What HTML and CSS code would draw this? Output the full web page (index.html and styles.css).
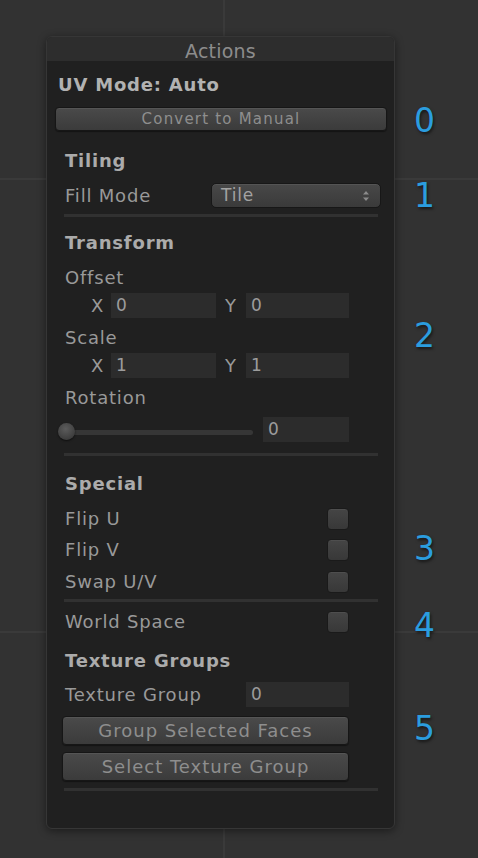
FILE: index.html
```html
<!DOCTYPE html>
<html>
<head>
<meta charset="utf-8">
<link rel="stylesheet" href="styles.css">
</head>
<body>
<div class="stage">
  <div class="panel">
    <div class="panel-header">Actions</div>
    <div class="panel-body">
      <div class="mode-title">UV Mode: Auto</div>
      <div class="btn btn-convert">Convert to Manual</div>

      <div class="heading h-tiling">Tiling</div>
      <div class="row row-fill">
        <span class="label">Fill Mode</span>
        <div class="dropdown">
          <span>Tile</span>
          <svg class="arrows" width="8" height="12" viewBox="0 0 8 12"><path d="M4 1 L7 4.5 L1 4.5 Z M4 11 L7 7.5 L1 7.5 Z" fill="#8a8a8a"/></svg>
        </div>
      </div>
      <div class="sep sep-1"></div>

      <div class="heading h-transform">Transform</div>
      <div class="label-row lr-offset">Offset</div>
      <div class="xy-row xy-1">
        <span class="axis">X</span><div class="field f-x">0</div>
        <span class="axis axis-y">Y</span><div class="field f-y">0</div>
      </div>
      <div class="label-row lr-scale">Scale</div>
      <div class="xy-row xy-2">
        <span class="axis">X</span><div class="field f-x">1</div>
        <span class="axis axis-y">Y</span><div class="field f-y">1</div>
      </div>
      <div class="label-row lr-rot">Rotation</div>
      <div class="slider-row">
        <div class="slider"><div class="track"></div><div class="knob"></div></div>
        <div class="field f-rot">0</div>
      </div>
      <div class="sep sep-2"></div>

      <div class="heading h-special">Special</div>
      <div class="check-row cr-1"><span class="label">Flip U</span><div class="checkbox"></div></div>
      <div class="check-row cr-2"><span class="label">Flip V</span><div class="checkbox"></div></div>
      <div class="check-row cr-3"><span class="label">Swap U/V</span><div class="checkbox"></div></div>
      <div class="sep sep-3"></div>
      <div class="check-row cr-4"><span class="label">World Space</span><div class="checkbox"></div></div>

      <div class="heading h-groups">Texture Groups</div>
      <div class="row row-group">
        <span class="label">Texture Group</span>
        <div class="field f-group">0</div>
      </div>
      <div class="btn btn-big bb-1">Group Selected Faces</div>
      <div class="btn btn-big bb-2">Select Texture Group</div>
      <div class="sep sep-4"></div>
    </div>
  </div>

  <div class="callouts">
    <div class="num n0">0</div>
    <div class="num n1">1</div>
    <div class="num n2">2</div>
    <div class="num n3">3</div>
    <div class="num n4">4</div>
    <div class="num n5">5</div>
  </div>
</div>
</body>
</html>
```
FILE: styles.css
```css
html, body {
  margin: 0;
  padding: 0;
}
body {
  width: 478px;
  height: 858px;
  overflow: hidden;
  background-color: #323232;
  background-image:
    linear-gradient(to right, transparent 223px, #3a3a3a 223px, #3a3a3a 225px, transparent 225px),
    linear-gradient(to bottom, transparent 178px, #3a3a3a 178px, #3a3a3a 180px, transparent 180px),
    linear-gradient(to bottom, transparent 631px, #3a3a3a 631px, #3a3a3a 633px, transparent 633px);
  font-family: "DejaVu Sans", "Liberation Sans", sans-serif;
  color: #999999;
}
.stage {
  display: flex;
  align-items: flex-start;
  padding-left: 46px;
}
.panel {
  margin-top: 36px;
  width: 349px;
  height: 793px;
  box-sizing: border-box;
  border: 1px solid #363636;
  border-radius: 6px;
  background: #202020;
  box-shadow: 0 2px 8px rgba(0, 0, 0, 0.45);
  overflow: hidden;
}
.panel-header {
  height: 24px;
  line-height: 28px;
  background: #2d2d2d;
  text-align: center;
  font-size: 19px;
  letter-spacing: 0.2px;
  color: #8c8c8c;
}
.panel-body {
  display: flex;
  flex-direction: column;
}
.mode-title {
  margin: 9px 0 0 11px;
  height: 30px;
  line-height: 30px;
  font-size: 18px;
  font-weight: bold;
  letter-spacing: 0.8px;
  color: #b2b2b2;
}
.btn {
  box-sizing: border-box;
  border: 1px solid #161616;
  border-radius: 4px;
  background: linear-gradient(to bottom, #4a4a4a, #3b3b3b);
  box-shadow: inset 0 1px 0 #555555, 0 1px 1px rgba(0, 0, 0, 0.4);
  text-align: center;
  color: #8e8e8e;
}
.btn-convert {
  margin: 7px 7px 0 8px;
  height: 24px;
  line-height: 22px;
  font-size: 15px;
  letter-spacing: 1.2px;
}
.heading {
  margin-left: 18px;
  height: 30px;
  line-height: 30px;
  font-size: 18px;
  font-weight: bold;
  letter-spacing: 0.8px;
  color: #ababab;
}
.h-tiling { margin-top: 15px; }
.h-transform { margin-top: 11px; }
.h-special { margin-top: 13px; }
.h-groups { margin-top: 13px; }

.label, .label-row, .axis {
  font-size: 18px;
  letter-spacing: 0.8px;
  color: #999999;
}
.row {
  display: flex;
  align-items: center;
  margin-left: 18px;
  height: 25px;
  line-height: 25px;
}
.row-fill {
  margin-top: 7px;
  width: 316px;
}
.dropdown {
  margin-left: auto;
  box-sizing: border-box;
  width: 170px;
  height: 25px;
  border: 1px solid #171717;
  border-radius: 5px;
  background: linear-gradient(to bottom, #484848, #3a3a3a);
  box-shadow: inset 0 1px 0 #545454;
  display: flex;
  align-items: center;
  padding: 0 10px 0 9px;
  font-size: 17px;
  letter-spacing: 0.8px;
  color: #a2a2a2;
}
.dropdown span {
  flex: 1;
  line-height: 23px;
}
.arrows {
  display: block;
}
.sep {
  margin-left: 17px;
  width: 314px;
  height: 3px;
  background: #313131;
}
.sep-1 { margin-top: 6px; }
.sep-2 { margin-top: 11px; }
.sep-3 { margin-top: 6px; }
.sep-4 { margin-top: 7px; }

.label-row {
  margin: 8px 0 0 18px;
  height: 24px;
  line-height: 24px;
}
.xy-row {
  margin: 3px 0 0 44px;
  height: 25px;
  display: flex;
  align-items: center;
}
.axis {
  width: 20px;
  line-height: 25px;
}
.axis-y {
  margin-left: 9px;
  width: 21px;
}
.field {
  box-sizing: border-box;
  height: 25px;
  line-height: 25px;
  background: #2c2c2c;
  padding-left: 5px;
  font-size: 17px;
  letter-spacing: 0.5px;
  color: #9c9c9c;
}
.f-x { width: 105px; }
.f-y { width: 103px; }
.f-rot { width: 86px; margin-left: 10px; }
.f-group { width: 103px; margin-left: auto; }

.slider-row {
  margin: 7px 0 0 11px;
  height: 25px;
  display: flex;
  align-items: center;
}
.slider {
  position: relative;
  width: 195px;
  height: 25px;
}
.track {
  position: absolute;
  left: 8px;
  right: 0;
  top: 13px;
  height: 5px;
  border-radius: 3px;
  background: #363636;
}
.knob {
  position: absolute;
  left: 0;
  top: 6px;
  width: 17px;
  height: 17px;
  border-radius: 50%;
  background: radial-gradient(circle at 45% 35%, #5c5c5c, #3c3c3c 75%);
  box-shadow: 0 1px 2px rgba(0, 0, 0, 0.6);
}

.check-row {
  margin-left: 18px;
  width: 284px;
  height: 22px;
  line-height: 22px;
  display: flex;
  align-items: center;
}
.cr-1 { margin-top: 9px; }
.cr-2 { margin-top: 9px; }
.cr-3 { margin-top: 10px; }
.cr-4 { margin-top: 9px; }
.checkbox {
  margin-left: auto;
  box-sizing: border-box;
  width: 22px;
  height: 22px;
  border: 1px solid #1a1a1a;
  border-radius: 4px;
  background: linear-gradient(to bottom, #454545, #383838);
  box-shadow: inset 0 1px 0 #4e4e4e;
}

.row-group {
  margin-top: 6px;
  width: 284px;
}
.btn-big {
  margin: 0 0 0 15px;
  width: 287px;
  height: 29px;
  line-height: 27px;
  font-size: 18px;
  letter-spacing: 1px;
}
.bb-1 { margin-top: 9px; }
.bb-2 { margin-top: 7px; }

.callouts {
  margin-left: 19px;
  display: flex;
  flex-direction: column;
}
.num {
  height: 33px;
  line-height: 33px;
  font-size: 33px;
  color: #2b9ddf;
  text-shadow: 1px 2px 3px rgba(0, 0, 0, 0.55);
}
.n0 { margin-top: 104px; }
.n1 { margin-top: 42px; }
.n2 { margin-top: 107px; }
.n3 { margin-top: 180px; }
.n4 { margin-top: 44px; }
.n5 { margin-top: 70px; }
```
